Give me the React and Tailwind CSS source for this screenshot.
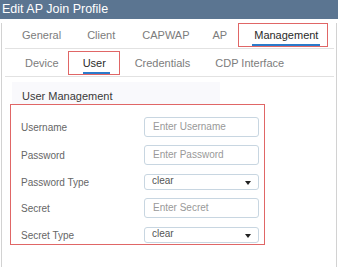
import React from "react";

function TextBox({ placeholder }) {
  return (
    <div className="h-[20px] w-[115px] rounded-[3px] border border-[#c8d6e1] bg-white pl-[8px] text-[10px] leading-[18px] text-[#999]">
      {placeholder}
    </div>
  );
}

function SelectBox({ value }) {
  return (
    <div className="flex h-[16px] w-[115px] items-start justify-between rounded-[3px] border border-[#c8d6e1] bg-white pl-[7px] pr-[7px]">
      <span className="text-[10px] leading-[12px] text-[#555]">{value}</span>
      <svg width="6" height="4" viewBox="0 0 6 4" className="mt-[6px]">
        <path d="M0 0 L6 0 L3 4 Z" fill="#222" />
      </svg>
    </div>
  );
}

function Row({ label, children, className = "" }) {
  return (
    <div className={"flex items-center " + className}>
      <div className="w-[133px] pl-[10px] text-[10px] text-[#666]">{label}</div>
      {children}
    </div>
  );
}

export default function App() {
  return (
    <div className="h-[267px] w-[338px] overflow-hidden bg-white font-['Liberation_Sans',Arial,sans-serif]">
      <div className="h-[19px] bg-[#5b7591] pl-[2px] text-[12.5px] leading-[19px] text-white">
        Edit AP Join Profile
      </div>
      <div className="ml-[1px] h-[247px] w-[336px] border-x border-b border-[#d2d2d2]">
        {/* top tabs */}
        <div className="mt-[4px] flex h-[24px] items-stretch text-[11px] text-[#7c7c7c]">
          <span className="ml-[20px] leading-[25px]">General</span>
          <span className="ml-[26px] leading-[25px]">Client</span>
          <span className="ml-[27px] leading-[25px]">CAPWAP</span>
          <span className="ml-[23px] leading-[25px]">AP</span>
          <div className="ml-[11px] w-[90px] border border-[#e06666] pl-[15px]">
            <div className="inline-flex flex-col">
              <span className="pt-[3px] leading-[17px] text-[#2a2a2a]">Management</span>
              <span className="-mx-[2px] h-[2px] bg-[#2b7bcb]" />
            </div>
          </div>
        </div>
        <div className="ml-[3px] mr-[2px] mt-[1px] h-[1px] bg-[#e2e2e2]" />
        {/* sub tabs */}
        <div className="mt-[2px] flex h-[24px] items-stretch text-[11px] text-[#7c7c7c]">
          <span className="ml-[23px] leading-[25px]">Device</span>
          <div className="ml-[9px] w-[52px] border border-[#e06666] pl-[14px]">
            <div className="inline-flex flex-col">
              <span className="pt-[3px] leading-[17px] text-[#2a2a2a]">User</span>
              <span className="-mr-[4px] h-[2px] bg-[#2b7bcb]" />
            </div>
          </div>
          <span className="ml-[15px] leading-[25px]">Credentials</span>
          <span className="ml-[25px] leading-[25px]">CDP Interface</span>
        </div>
        <div className="ml-[3px] mr-[2px] mt-[1px] h-[1px] bg-[#e2e2e2]" />
        {/* section header */}
        <div className="ml-[10px] mt-[5px] h-[22px] w-[208px] bg-[#f9f9fc] pl-[10px] pt-[7px] text-[11px] leading-[14px] text-[#3a3a3a]">
          User Management
        </div>
        {/* form box */}
        <div className="ml-[8px] h-[141px] w-[255px] border border-[#e06666] pt-[12px]">
          <Row label="Username">
            <TextBox placeholder="Enter Username" />
          </Row>
          <Row label="Password" className="mt-[8px]">
            <TextBox placeholder="Enter Password" />
          </Row>
          <Row label="Password Type" className="mt-[9px]">
            <SelectBox value="clear" />
          </Row>
          <Row label="Secret" className="mt-[8px]">
            <TextBox placeholder="Enter Secret" />
          </Row>
          <Row label="Secret Type" className="mt-[9px]">
            <SelectBox value="clear" />
          </Row>
        </div>
      </div>
    </div>
  );
}
